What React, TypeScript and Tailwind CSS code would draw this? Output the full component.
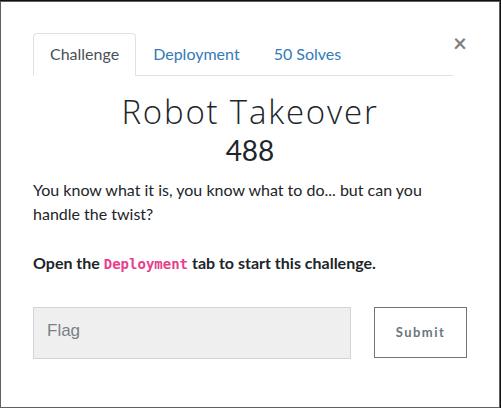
export default function App() {
  return (
    <div className="h-[408px] w-[501px] overflow-hidden bg-[#111111] pt-px font-['Lato',sans-serif]">
      <div className="h-[407px] w-[500px] border border-[#606060] bg-white px-8 pt-[31px]">
        <div className="flex items-start">
          <ul className="-mb-px flex w-[420px] border-b border-[#dee2e6] text-[16px] leading-6">
            <li className="-mb-px rounded-t border border-[#dee2e6] border-b-white bg-white px-4 py-2 text-[#495057]">
              Challenge
            </li>
            <li className="border border-transparent px-4 py-2 text-[#337ab7]">Deployment</li>
            <li className="border border-transparent px-4 py-2 text-[#337ab7]">50 Solves</li>
          </ul>
          <button className="ml-auto mt-[-2px] text-[24px] font-bold leading-none text-black/50">×</button>
        </div>

        <div className="text-center text-[#212529]">
          <h3 className="mt-[17px] font-['Open_Sans',sans-serif] text-[33px] font-light leading-[40px] tracking-[1.8px]">
            Robot Takeover
          </h3>
          <h4 className="mt-[1px] text-[28px] leading-[34px]">488</h4>
        </div>

        <p className="mt-[11px] text-[16px] leading-6 text-[#212529]">
          You know what it is, you know what to do... but can you handle the twist?
        </p>
        <p className="mt-[25px] text-[16px] font-bold leading-6 text-[#212529]">
          Open the{' '}
          <code className="font-['DejaVu_Sans_Mono',monospace] text-[14px] font-bold text-[#e83e8c]">Deployment</code>{' '}
          tab to start this challenge.
        </p>

        <div className="mt-[31px] flex items-start gap-[23px]">
          <div className="flex h-[52px] w-[318px] items-center border border-[#ced4da] bg-[#efefef] px-[13px] pb-[4px] font-['Liberation_Sans',sans-serif] text-[17px] text-[#7a8087]">
            Flag
          </div>
          <button className="h-[51px] w-[93px] border border-[#6c757d] bg-white text-[13px] font-bold tracking-[1.5px] text-[#6c757d]">
            Submit
          </button>
        </div>
      </div>
    </div>
  );
}
